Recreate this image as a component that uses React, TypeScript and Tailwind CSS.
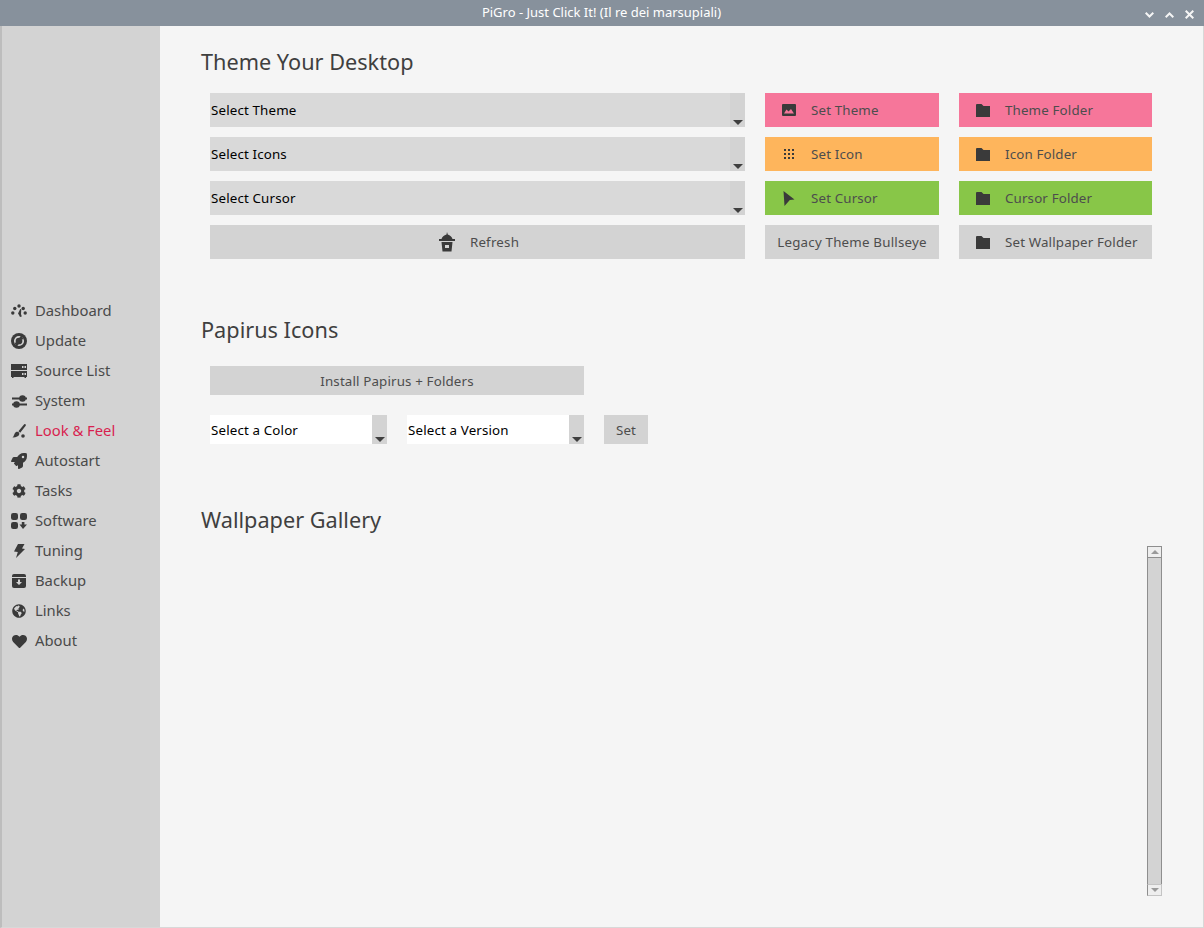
import React from "react";
import { FaRocket, FaCog, FaGlobeAmericas, FaHeart } from "react-icons/fa";

const DashIcon = () => (
  <svg width="16" height="15" viewBox="0 0 16 15" fill="#3a3a3a">
    <circle cx="1.800" cy="9" r="1.700" /><circle cx="3.800" cy="4.500" r="1.700" /><circle cx="8" cy="2" r="1.700" /><circle cx="12.200" cy="4.500" r="1.700" /><circle cx="14.200" cy="9" r="1.700" />
    <path d="M9.200 5 10.300 5.300 10 10 10.800 12.500 9 13 8 11 7 9.500z" />
  </svg>
);
const UpdateIcon = () => (
  <svg width="16" height="16" viewBox="0 0 16 16">
    <circle cx="8" cy="8" r="8" fill="#3a3a3a" />
    <circle cx="8" cy="8" r="4.200" fill="none" stroke="#d3d3d3" strokeWidth="1.700" />
    <path d="M10.500 2 12.500 6.500 7.500 6zM5.500 14 3.500 9.500 8.500 10z" fill="#3a3a3a" />
  </svg>
);
const ServerIcon = () => (
  <svg width="16" height="14" viewBox="0 0 16 14" fill="#3a3a3a">
    <path fillRule="evenodd" d="M0 0H16V6H0zM11 2V4H12.500V2zM13.500 2V4H15V2z" />
    <path fillRule="evenodd" d="M0 7H16V13H15V14H13.500V13H2.500V14H1V13H0zM11 9V11H12.500V9zM13.500 9V11H15V9z" />
  </svg>
);
const SliderIcon = () => (
  <svg width="15" height="13" viewBox="0 0 15 13" fill="#3a3a3a">
    <rect x="0" y="2.500" width="15" height="2" /><circle cx="10.500" cy="3.500" r="3.300" />
    <rect x="0" y="8.500" width="15" height="2" /><circle cx="4.500" cy="9.500" r="3.300" />
  </svg>
);
const BrushIcon = () => (
  <svg width="14" height="14" viewBox="0 0 14 14" fill="#3a3a3a">
    <path d="M13.400.2c.5.400.6 1 .3 1.500L8.200 8.800 6.400 7.300 12 .4c.4-.4 1-.6 1.400-.2z" />
    <path d="M5.400 7.800c1.500.1 2.300 1.400 1.800 2.700-.6 1.700-2.900 3.100-6.700 3 1.300-.9 1.300-2.500 2.200-4 .6-1.100 1.600-1.800 2.700-1.700z" />
    <circle cx="11" cy="12" r="1.800" />
  </svg>
);
const SoftIcon = () => (
  <svg width="16" height="16" viewBox="0 0 16 16" fill="#3a3a3a">
    <rect x="0" y="0" width="7" height="7" rx="2.200" /><rect x="9" y="0" width="7" height="7" rx="2.200" /><rect x="0" y="9" width="7" height="7" rx="2.200" />
    <path d="M10.800 9h2.600v2.500H16L12 16 8.500 11.500h2.300z" />
  </svg>
);
const BoltIcon = () => (
  <svg width="11" height="14" viewBox="0 0 11 14" fill="#3a3a3a"><path d="M4 0H10.500L8 4.500 11 5 2 14 3.800 8 0 7.500z" /></svg>
);
const BackupIcon = () => (
  <svg width="14" height="14" viewBox="0 0 14 14">
    <rect x="0" y="0" width="14" height="14" rx="2" fill="#3a3a3a" />
    <rect x="0" y="3" width="14" height="1" fill="#d3d3d3" />
    <path d="M6 5.500h2v2.500h2L7 11 4 8h2z" fill="#d3d3d3" />
  </svg>
);
const ImageIcon = () => (
  <svg width="14" height="12" viewBox="0 0 14 12">
    <rect width="14" height="12" rx="1" fill="#3a3a3a" />
    <path d="M2 9.500 4.500 5.500 6.500 7.500 9 5 12 9.500z" fill="#f6769a" />
  </svg>
);
const GripIcon = () => (
  <svg width="12" height="12" viewBox="0 0 12 12" fill="#3a3a3a">
    {[1, 5, 9].map((y) => [1, 5, 9].map((x) => <rect key={`${x}-${y}`} x={x} y={y} width="2" height="2" />))}
  </svg>
);
const CursorIcon = () => (
  <svg width="12" height="15" viewBox="0 0 12 15" fill="#3a3a3a"><path d="M0.500 0 11.500 8.500 6.800 9 1.500 15z" /></svg>
);
const FolderIcon = () => (
  <svg width="14" height="13" viewBox="0 0 14 13" fill="#3a3a3a"><path d="M0 1Q0 0 1 0H5.500L7.500 2H14V13H0z" /></svg>
);
const RefreshIcon = () => (
  <svg width="16" height="20" viewBox="0 0 16 20" fill="#3a3a3a">
    <path d="M8 0 8.800 2.500C11 3 13 5 13.500 7H16V9H0V7H2.500C3 5 5 3 7.500 2.500z" />
    <path d="M2.500 10H13.500L12.500 19.500H3.500zM6 13V16H10V13z" fillRule="evenodd" />
  </svg>
);
const Arrow = () => (
  <span className="absolute bottom-[2px] left-1/2 -translate-x-1/2 w-0 h-0 border-x-[5px] border-x-transparent border-t-[5px] border-t-[#3f3f3f]" />
);

const Combo = ({ label }: { label: string }) => (
  <div className="h-[34px] bg-[#d9d9d9] flex items-center">
    <span className="flex-1 pl-px pt-[2px] text-[13.33px] tracking-[0.15px] text-black">{label}</span>
    <span className="relative w-[15px] h-full bg-[#d3d3d3]"><Arrow /></span>
  </div>
);
const SmallCombo = ({ label }: { label: string }) => (
  <div className="w-[177px] h-[29px] bg-white flex items-center">
    <span className="flex-1 pl-px pt-[2px] text-[13.33px] tracking-[0.15px] text-black">{label}</span>
    <span className="relative w-[15px] h-full bg-[#d3d3d3]"><Arrow /></span>
  </div>
);
const Btn = ({ icon, label, bg }: { icon?: React.ReactNode; label: string; bg: string }) => (
  <div className={`h-[34px] flex items-center text-[13.33px] tracking-[0.15px] text-[#4d4d4d] ${bg}`}>
    <span className="w-[46px] pl-4 flex justify-start"><span className="w-[16px] flex justify-center">{icon}</span></span>
    <span className="pt-[2px]">{label}</span>
  </div>
);
const folder = <FolderIcon />;

const nav: [string, React.ReactNode, boolean?][] = [
  ["Dashboard", <DashIcon />],
  ["Update", <UpdateIcon />],
  ["Source List", <ServerIcon />],
  ["System", <SliderIcon />],
  ["Look & Feel", <BrushIcon />, true],
  ["Autostart", <FaRocket size={16} color="#3a3a3a" />],
  ["Tasks", <FaCog size={14} color="#3a3a3a" />],
  ["Software", <SoftIcon />],
  ["Tuning", <BoltIcon />],
  ["Backup", <BackupIcon />],
  ["Links", <FaGlobeAmericas size={14} color="#3a3a3a" />],
  ["About", <FaHeart size={15} color="#3a3a3a" />],
];

export default function App() {
  return (
    <div className="w-[1204px] h-[928px] flex flex-col overflow-hidden bg-[#f5f5f5] text-[#3f3f3f]" style={{ fontFamily: '"Noto Sans", sans-serif' }}>
      <div className="relative h-[26px] shrink-0 bg-[#87919c] flex items-center justify-center text-[13px] text-white">
        <span className="pr-[1px]">PiGro - Just Click It! (Il re dei marsupiali)</span>
        <div className="absolute right-[10px] top-[10px] flex gap-[11px] items-center">
          <svg width="9" height="6" viewBox="0 0 9 6" fill="none" stroke="#f5f5f5" strokeWidth="2"><path d="M.7 .8 4.500 4.500 8.300 .8" /></svg>
          <svg width="9" height="6" viewBox="0 0 9 6" fill="none" stroke="#f5f5f5" strokeWidth="2"><path d="M.7 5.200 4.500 1.500 8.300 5.200" /></svg>
          <svg width="9" height="9" viewBox="0 0 9 9" fill="none" stroke="#f5f5f5" strokeWidth="2"><path d="M.7 .7 8.300 8.300M8.300 .7 .7 8.300" /></svg>
        </div>
      </div>
      <div className="flex-1 flex min-h-0 border-l-2 border-r border-b border-l-[#bdbdbd] border-r-[#d8d8d8] border-b-[#d8d8d8]">
        <aside className="w-[158px] shrink-0 bg-[#d3d3d3] flex flex-col justify-start pt-[270px]">
          {nav.map(([name, icon, active]) => (
            <div key={name} className="h-[30px] flex items-center text-[14.8px]">
              <span className="w-[33px] pl-[9px] flex"><span className="w-[16px] flex justify-center">{icon}</span></span>
              <span className={`pb-[2px] ${active ? "text-[#d81f4f]" : "text-[#4a4a4a]"}`}>{name}</span>
            </div>
          ))}
        </aside>
        <main className="flex-1 flex flex-col min-w-0 pl-[41px]">
          <h2 className="h-[30px] mt-[22px] pb-[2px] flex items-center text-[21.7px] leading-none text-[#3f3f3f]">Theme Your Desktop</h2>
          <div className="mt-[15px] ml-[9px] grid grid-cols-[535px_174px_193px] gap-x-5 gap-y-[10px]">
            <Combo label="Select Theme" />
            <Btn icon={<ImageIcon />} label="Set Theme" bg="bg-[#f6769a]" />
            <Btn icon={folder} label="Theme Folder" bg="bg-[#f6769a]" />
            <Combo label="Select Icons" />
            <Btn icon={<GripIcon />} label="Set Icon" bg="bg-[#feb55c]" />
            <Btn icon={folder} label="Icon Folder" bg="bg-[#feb55c]" />
            <Combo label="Select Cursor" />
            <Btn icon={<CursorIcon />} label="Set Cursor" bg="bg-[#88c648]" />
            <Btn icon={folder} label="Cursor Folder" bg="bg-[#88c648]" />
            <div className="h-[34px] pl-[3px] bg-[#d3d3d3] flex items-center justify-center gap-[15px] text-[13.33px] tracking-[0.2px] text-[#4d4d4d]">
              <RefreshIcon />
              <span className="pt-[2px]">Refresh</span>
            </div>
            <div className="h-[34px] pt-[2px] bg-[#d3d3d3] flex items-center justify-center text-[13.33px] tracking-[0.2px] text-[#4d4d4d]">Legacy Theme Bullseye</div>
            <Btn icon={folder} label="Set Wallpaper Folder" bg="bg-[#d3d3d3]" />
          </div>
          <h2 className="h-[30px] mt-[57px] pb-[2px] flex items-center text-[21.7px] leading-none">Papirus Icons</h2>
          <div className="mt-[20px] ml-[9px] w-[374px] h-[29px] pt-[2px] bg-[#d3d3d3] flex items-center justify-center text-[13.33px] tracking-[0.15px] text-[#4d4d4d]">Install Papirus + Folders</div>
          <div className="mt-[20px] ml-[9px] flex gap-5">
            <SmallCombo label="Select a Color" />
            <SmallCombo label="Select a Version" />
            <div className="w-[44px] h-[29px] pt-[2px] bg-[#d3d3d3] flex items-center justify-center text-[13.33px] tracking-[0.15px] text-[#4d4d4d]">Set</div>
          </div>
          <h2 className="h-[30px] mt-[62px] pb-[2px] flex items-center text-[21.7px] leading-none">Wallpaper Gallery</h2>
          <div className="mt-[10px] ml-[946px] w-[15px] h-[350px] flex flex-col border-x border-[#8e8e8e] bg-[#d3d3d3]">
            <div className="h-[12px] -mx-px border border-[#8e8e8e] bg-[#eeeeee] flex items-center justify-center">
              <span className="w-0 h-0 border-x-[4px] border-x-transparent border-b-[4px] border-b-[#9a9a9a]" />
            </div>
            <div className="flex-1" />
            <div className="h-[12px] -mx-px border border-[#c4c4c4] border-l-[#8e8e8e] bg-[#eeeeee] flex items-center justify-center">
              <span className="w-0 h-0 border-x-[4px] border-x-transparent border-t-[4px] border-t-[#9a9a9a]" />
            </div>
          </div>
        </main>
      </div>
    </div>
  );
}
